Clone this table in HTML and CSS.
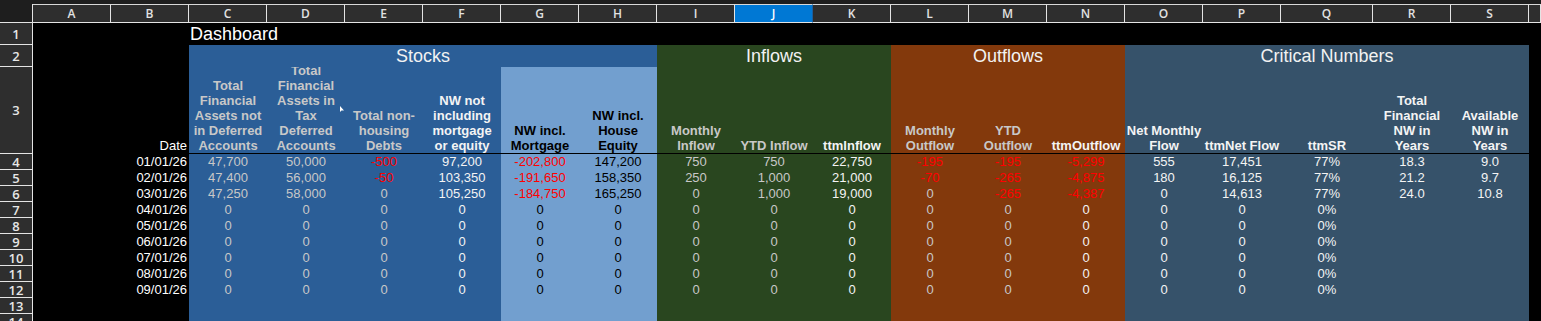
FILE: index.html
```html
<!DOCTYPE html>
<html lang="en">
<head>
<meta charset="utf-8">
<title>Dashboard</title>
<link rel="stylesheet" href="styles.css">
</head>
<body>
<div class="sheet">
  <!-- column headers -->
  <div class="corner"></div>
  <div class="ch">A</div><div class="ch">B</div><div class="ch">C</div><div class="ch">D</div><div class="ch">E</div><div class="ch">F</div><div class="ch">G</div><div class="ch">H</div><div class="ch">I</div><div class="ch sel">J</div><div class="ch">K</div><div class="ch">L</div><div class="ch">M</div><div class="ch">N</div><div class="ch">O</div><div class="ch">P</div><div class="ch">Q</div><div class="ch">R</div><div class="ch">S</div><div class="ch"></div>

  <!-- row 1 -->
  <div class="rh">1</div><div class="blk"></div><div class="blk"></div>
  <div class="blk title-main">Dashboard</div>
  <div class="blk span17"></div>

  <!-- row 2 -->
  <div class="rh">2</div><div class="blk"></div><div class="blk"></div>
  <div class="stk section span6">Stocks</div>
  <div class="inf section span3">Inflows</div>
  <div class="out section span3">Outflows</div>
  <div class="crit section span5">Critical Numbers</div>
  <div class="blk"></div>

  <!-- row 3 -->
  <div class="rh">3</div><div class="blk"></div>
  <div class="blk hdate">Date</div>
  <div class="stk hd g">Total Financial Assets not in Deferred Accounts</div>
  <div class="stk hd g">Total Financial Assets in Tax Deferred Accounts</div>
  <div class="stk hd g">Total non-housing Debts</div>
  <div class="stk hd w">NW not including mortgage or equity</div>
  <div class="lt hd k">NW incl. Mortgage</div>
  <div class="lt hd k">NW incl. House Equity</div>
  <div class="inf hd g">Monthly Inflow</div>
  <div class="inf hd g">YTD Inflow</div>
  <div class="inf hd w">ttmInflow</div>
  <div class="out hd g">Monthly Outflow</div>
  <div class="out hd g">YTD Outflow</div>
  <div class="out hd w">ttmOutflow</div>
  <div class="crit hd w tight">Net Monthly Flow</div>
  <div class="crit hd w tight">ttmNet Flow</div>
  <div class="crit hd w">ttmSR</div>
  <div class="crit hd w">Total Financial NW in Years</div>
  <div class="crit hd w">Available NW in Years</div>
  <div class="blk"></div>

  <!-- row 4 -->
  <div class="rh">4</div><div class="blk"></div><div class="blk date">01/01/26</div>
  <div class="stk g">47,700</div><div class="stk g">50,000</div><div class="stk r">-500</div><div class="stk w">97,200</div>
  <div class="lt r">-202,800</div><div class="lt k">147,200</div>
  <div class="inf g">750</div><div class="inf g">750</div><div class="inf w">22,750</div>
  <div class="out r">-195</div><div class="out r">-195</div><div class="out r">-5,299</div>
  <div class="crit w">555</div><div class="crit w">17,451</div><div class="crit w">77%</div><div class="crit w">18.3</div><div class="crit w">9.0</div>
  <div class="blk"></div>

  <!-- row 5 -->
  <div class="rh">5</div><div class="blk"></div><div class="blk date">02/01/26</div>
  <div class="stk g">47,400</div><div class="stk g">56,000</div><div class="stk r">-50</div><div class="stk w">103,350</div>
  <div class="lt r">-191,650</div><div class="lt k">158,350</div>
  <div class="inf g">250</div><div class="inf g">1,000</div><div class="inf w">21,000</div>
  <div class="out r">-70</div><div class="out r">-265</div><div class="out r">-4,875</div>
  <div class="crit w">180</div><div class="crit w">16,125</div><div class="crit w">77%</div><div class="crit w">21.2</div><div class="crit w">9.7</div>
  <div class="blk"></div>

  <!-- row 6 -->
  <div class="rh">6</div><div class="blk"></div><div class="blk date">03/01/26</div>
  <div class="stk g">47,250</div><div class="stk g">58,000</div><div class="stk g">0</div><div class="stk w">105,250</div>
  <div class="lt r">-184,750</div><div class="lt k">165,250</div>
  <div class="inf g">0</div><div class="inf g">1,000</div><div class="inf w">19,000</div>
  <div class="out g">0</div><div class="out r">-265</div><div class="out r">-4,387</div>
  <div class="crit w">0</div><div class="crit w">14,613</div><div class="crit w">77%</div><div class="crit w">24.0</div><div class="crit w">10.8</div>
  <div class="blk"></div>

  <!-- row 7 -->
  <div class="rh">7</div><div class="blk"></div><div class="blk date">04/01/26</div>
  <div class="stk g">0</div><div class="stk g">0</div><div class="stk g">0</div><div class="stk w">0</div>
  <div class="lt k">0</div><div class="lt k">0</div>
  <div class="inf g">0</div><div class="inf g">0</div><div class="inf w">0</div>
  <div class="out g">0</div><div class="out g">0</div><div class="out w">0</div>
  <div class="crit w">0</div><div class="crit w">0</div><div class="crit w">0%</div><div class="crit"></div><div class="crit"></div>
  <div class="blk"></div>

  <!-- row 8 -->
  <div class="rh">8</div><div class="blk"></div><div class="blk date">05/01/26</div>
  <div class="stk g">0</div><div class="stk g">0</div><div class="stk g">0</div><div class="stk w">0</div>
  <div class="lt k">0</div><div class="lt k">0</div>
  <div class="inf g">0</div><div class="inf g">0</div><div class="inf w">0</div>
  <div class="out g">0</div><div class="out g">0</div><div class="out w">0</div>
  <div class="crit w">0</div><div class="crit w">0</div><div class="crit w">0%</div><div class="crit"></div><div class="crit"></div>
  <div class="blk"></div>

  <!-- row 9 -->
  <div class="rh">9</div><div class="blk"></div><div class="blk date">06/01/26</div>
  <div class="stk g">0</div><div class="stk g">0</div><div class="stk g">0</div><div class="stk w">0</div>
  <div class="lt k">0</div><div class="lt k">0</div>
  <div class="inf g">0</div><div class="inf g">0</div><div class="inf w">0</div>
  <div class="out g">0</div><div class="out g">0</div><div class="out w">0</div>
  <div class="crit w">0</div><div class="crit w">0</div><div class="crit w">0%</div><div class="crit"></div><div class="crit"></div>
  <div class="blk"></div>

  <!-- row 10 -->
  <div class="rh">10</div><div class="blk"></div><div class="blk date">07/01/26</div>
  <div class="stk g">0</div><div class="stk g">0</div><div class="stk g">0</div><div class="stk w">0</div>
  <div class="lt k">0</div><div class="lt k">0</div>
  <div class="inf g">0</div><div class="inf g">0</div><div class="inf w">0</div>
  <div class="out g">0</div><div class="out g">0</div><div class="out w">0</div>
  <div class="crit w">0</div><div class="crit w">0</div><div class="crit w">0%</div><div class="crit"></div><div class="crit"></div>
  <div class="blk"></div>

  <!-- row 11 -->
  <div class="rh">11</div><div class="blk"></div><div class="blk date">08/01/26</div>
  <div class="stk g">0</div><div class="stk g">0</div><div class="stk g">0</div><div class="stk w">0</div>
  <div class="lt k">0</div><div class="lt k">0</div>
  <div class="inf g">0</div><div class="inf g">0</div><div class="inf w">0</div>
  <div class="out g">0</div><div class="out g">0</div><div class="out w">0</div>
  <div class="crit w">0</div><div class="crit w">0</div><div class="crit w">0%</div><div class="crit"></div><div class="crit"></div>
  <div class="blk"></div>

  <!-- row 12 -->
  <div class="rh">12</div><div class="blk"></div><div class="blk date">09/01/26</div>
  <div class="stk g">0</div><div class="stk g">0</div><div class="stk g">0</div><div class="stk w">0</div>
  <div class="lt k">0</div><div class="lt k">0</div>
  <div class="inf g">0</div><div class="inf g">0</div><div class="inf w">0</div>
  <div class="out g">0</div><div class="out g">0</div><div class="out w">0</div>
  <div class="crit w">0</div><div class="crit w">0</div><div class="crit w">0%</div><div class="crit"></div><div class="crit"></div>
  <div class="blk"></div>

  <!-- row 13 -->
  <div class="rh">13</div><div class="blk"></div><div class="blk"></div>
  <div class="stk"></div><div class="stk"></div><div class="stk"></div><div class="stk"></div>
  <div class="lt"></div><div class="lt"></div>
  <div class="inf"></div><div class="inf"></div><div class="inf"></div>
  <div class="out"></div><div class="out"></div><div class="out"></div>
  <div class="crit"></div><div class="crit"></div><div class="crit"></div><div class="crit"></div><div class="crit"></div>
  <div class="blk"></div>

  <!-- row 14 -->
  <div class="rh">14</div><div class="blk"></div><div class="blk"></div>
  <div class="stk"></div><div class="stk"></div><div class="stk"></div><div class="stk"></div>
  <div class="lt"></div><div class="lt"></div>
  <div class="inf"></div><div class="inf"></div><div class="inf"></div>
  <div class="out"></div><div class="out"></div><div class="out"></div>
  <div class="crit"></div><div class="crit"></div><div class="crit"></div><div class="crit"></div><div class="crit"></div>
  <div class="blk"></div>
</div>
<svg class="pointer" width="5" height="7" viewBox="0 0 5 7"><polygon points="0,0 0,6 1.5,4.5 4,4.5" fill="#ffffff"/></svg>
</body>
</html>
```

FILE: styles.css
```css
html, body {
  margin: 0;
  background: #1e1e1e;
}
body {
  padding-top: 4px;
  height: 321px;
  box-sizing: border-box;
  overflow: hidden;
  position: relative;
  font-family: "Liberation Sans", Arial, sans-serif;
}

.sheet {
  display: grid;
  grid-template-columns: 33px repeat(16, 78px) 92px 78px 78px 1fr;
  grid-template-rows: 19px 22px 22px 87px repeat(11, 16px);
}

.sheet > div {
  box-sizing: border-box;
  overflow: hidden;
  white-space: nowrap;
  font-size: 13px;
  line-height: 16px;
  text-align: center;
  padding: 0 2px;
}

/* headers of the sheet */
.corner {
  background: #1e1e1e;
  border-right: 1px solid #e4e4e4;
  border-bottom: 1px solid #e4e4e4;
}
.sheet > .ch {
  background: #2e2e2e;
  border-top: 1px solid #d8d8d8;
  border-right: 1px solid #e4e4e4;
  border-bottom: 1px solid #e4e4e4;
  font-family: "Open Sans", "Noto Sans", sans-serif;
  font-size: 12px;
  font-weight: 600;
  line-height: 17px;
  color: #e2e2e2;
}
.sheet > .ch.sel {
  background: #0078d4;
  color: #ffffff;
  border-right-color: #1a5fa0;
}
.sheet > .rh {
  background: #2e2e2e;
  border-right: 1px solid #e4e4e4;
  border-bottom: 1px solid #e4e4e4;
  font-family: "Open Sans", "Noto Sans", sans-serif;
  font-size: 13px;
  font-weight: 600;
  color: #e6e6e6;
  display: flex;
  align-items: center;
  justify-content: center;
  padding: 0;
}

/* fills */
.blk { background: #000000; }
.stk { background: #2b5e97; }
.lt { background: #729fcf; }
.inf { background: #29461f; }
.out { background: #83390c; }
.crit { background: #36526a; }

/* text colours */
.g { color: #c8c8c8; }
.w { color: #f4f4f4; }
.k { color: #000000; }
.r { color: #ff0000; }

/* spans */
.span3 { grid-column: span 3; }
.span5 { grid-column: span 5; }
.span6 { grid-column: span 6; }
.span17 { grid-column: span 17; }

.sheet > .title-main {
  overflow: visible;
  text-align: left;
  font-size: 18px;
  line-height: 22px;
  color: #ffffff;
  position: relative;
  z-index: 1;
  padding-left: 1px;
}
.sheet > .section {
  font-size: 18px;
  line-height: 22px;
  color: #f2f2f2;
}

.sheet > .hd {
  display: flex;
  flex-direction: column;
  justify-content: flex-end;
  white-space: normal;
  font-weight: bold;
  line-height: 15px;
  border-bottom: 1px solid #000000;
}
.sheet > .hd.tight { padding: 0 1px; }

.sheet > .hdate {
  display: flex;
  flex-direction: column;
  justify-content: flex-end;
  align-items: flex-end;
  color: #ffffff;
  line-height: 15px;
  padding-bottom: 1px;
}
.sheet > .date {
  text-align: right;
  color: #ffffff;
}

.pointer {
  position: absolute;
  left: 340px;
  top: 106px;
}
```
